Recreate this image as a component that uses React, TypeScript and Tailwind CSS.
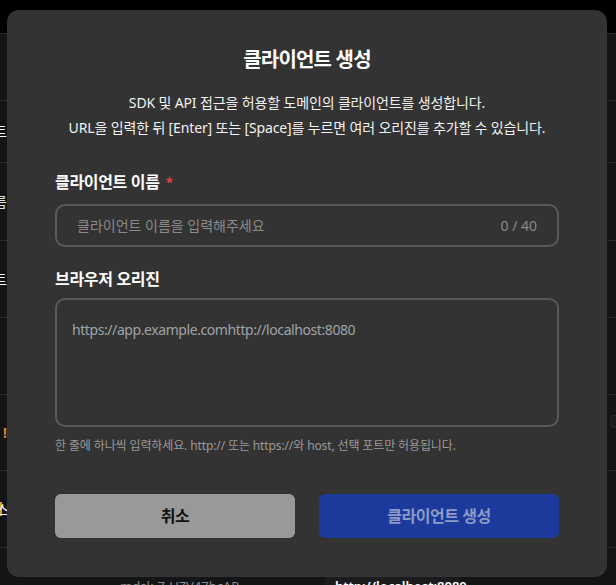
import React from 'react';

const rows = [
  { h: 'h-[62px]', peek: '클라이언트', peekClass: 'text-white', bar: false },
  { h: 'h-[78px]', peek: '이름', peekClass: 'text-[#e0e0e0]', bar: false },
  { h: 'h-[77px]', peek: '클라이언트', peekClass: 'text-white', bar: false },
  { h: 'h-[77px]', peek: '', peekClass: '', bar: false },
  { h: 'h-[76px]', peek: '!', peekClass: 'text-[#d08a3a] font-bold', bar: false },
  { h: 'h-[77px]', peek: '스', peekClass: 'text-white', bar: true },
];

const ClientDialog: React.FC = () => {
  return (
    <div className="absolute left-[7px] top-[10px] w-[600px] rounded-xl bg-[#333333] px-12 pt-9 pb-[39px] text-white">
      <h2 className="text-center text-[20px] font-bold leading-7 tracking-[-0.04em]">클라이언트 생성</h2>
      <div className="mt-4 text-center text-[14px] leading-[25px] tracking-[-0.01em] text-[#f2f2f2]">
        <p>SDK 및 API 접근을 허용할 도메인의 클라이언트를 생성합니다.</p>
        <p>URL을 입력한 뒤 [Enter] 또는 [Space]를 누르면 여러 오리진를 추가할 수 있습니다.</p>
      </div>

      <label className="mt-[30px] flex items-center gap-1.5 text-[16px] font-bold leading-6 tracking-[-0.02em]">
        클라이언트 이름
        <span className="text-[13px] text-[#e04444]">*</span>
      </label>
      <div className="mt-[10px] flex h-[43px] items-center justify-between rounded-[10px] border-2 border-[#5a5a5a] pl-5 pr-5">
        <span className="text-[14px] text-[#8a8a8a]">클라이언트 이름을 입력해주세요</span>
        <span className="text-[14px] text-[#8a8a8a]">0 / 40</span>
      </div>

      <label className="mt-5 block text-[16px] font-bold leading-6 tracking-[-0.02em]">브라우저 오리진</label>
      <div className="mt-[7px] h-[129px] rounded-[10px] border-2 border-[#5a5a5a] px-[15px] pt-5">
        <p className="text-[14px] leading-5 tracking-[-0.03em] text-[#9ea3a8]">https://app.example.comhttp://localhost:8080</p>
      </div>
      <p className="mt-[11px] text-[12px] leading-4 tracking-[-0.01em] text-[#9a9a9a]">
        한 줄에 하나씩 입력하세요. http:// 또는 https://와 host, 선택 포트만 허용됩니다.
      </p>

      <div className="mt-10 grid grid-cols-2 gap-6">
        <button className="h-11 rounded-md bg-[#999999] text-[16px] font-bold tracking-[-0.03em] text-[#111111]">취소</button>
        <button className="h-11 rounded-md bg-[#1b3a9b] text-[16px] font-bold tracking-[-0.03em] text-[#8d9ac6]">클라이언트 생성</button>
      </div>
    </div>
  );
};

export default function App() {
  return (
    <div className="relative h-[585px] w-[616px] overflow-hidden bg-[#131416] font-['Noto_Sans','Noto_Sans_CJK_KR',sans-serif]">
      <div className="h-[33px] bg-black" />
      <div className="h-[67px] border-t border-[#2a2a2a]" />
      {rows.map((r, i) => (
        <div key={i} className={`${r.h} flex items-center justify-between border-t border-[#2a2a2a]`}>
          <div className="flex items-center">
            {r.bar && <span className="h-[14px] w-[2px] bg-[#d9a520]" />}
            <span className={`-ml-[63px] w-[70px] text-right text-[14px] ${r.peekClass}`}>{r.peek}</span>
          </div>
          {i === 4 && <span className="mr-[-10px] mt-[-22px] h-[13px] w-4 rounded-sm border border-[#2a2a2a] bg-[#1a1b1d]" />}
        </div>
      ))}
      <div className="flex h-[38px] border-t border-[#2a2a2a]">
        <span className="ml-[120px] w-[205px] pt-[28px] text-[13px] leading-5 text-[#8a8a8a]">mdsk-7-UZV47bcAP</span>
        <span className="h-full w-[134px] bg-[#1c1c1e] pl-[10px] pt-[28px] text-[13px] font-semibold leading-5 text-white">http://localhost:8080</span>
      </div>
      <ClientDialog />
    </div>
  );
}
